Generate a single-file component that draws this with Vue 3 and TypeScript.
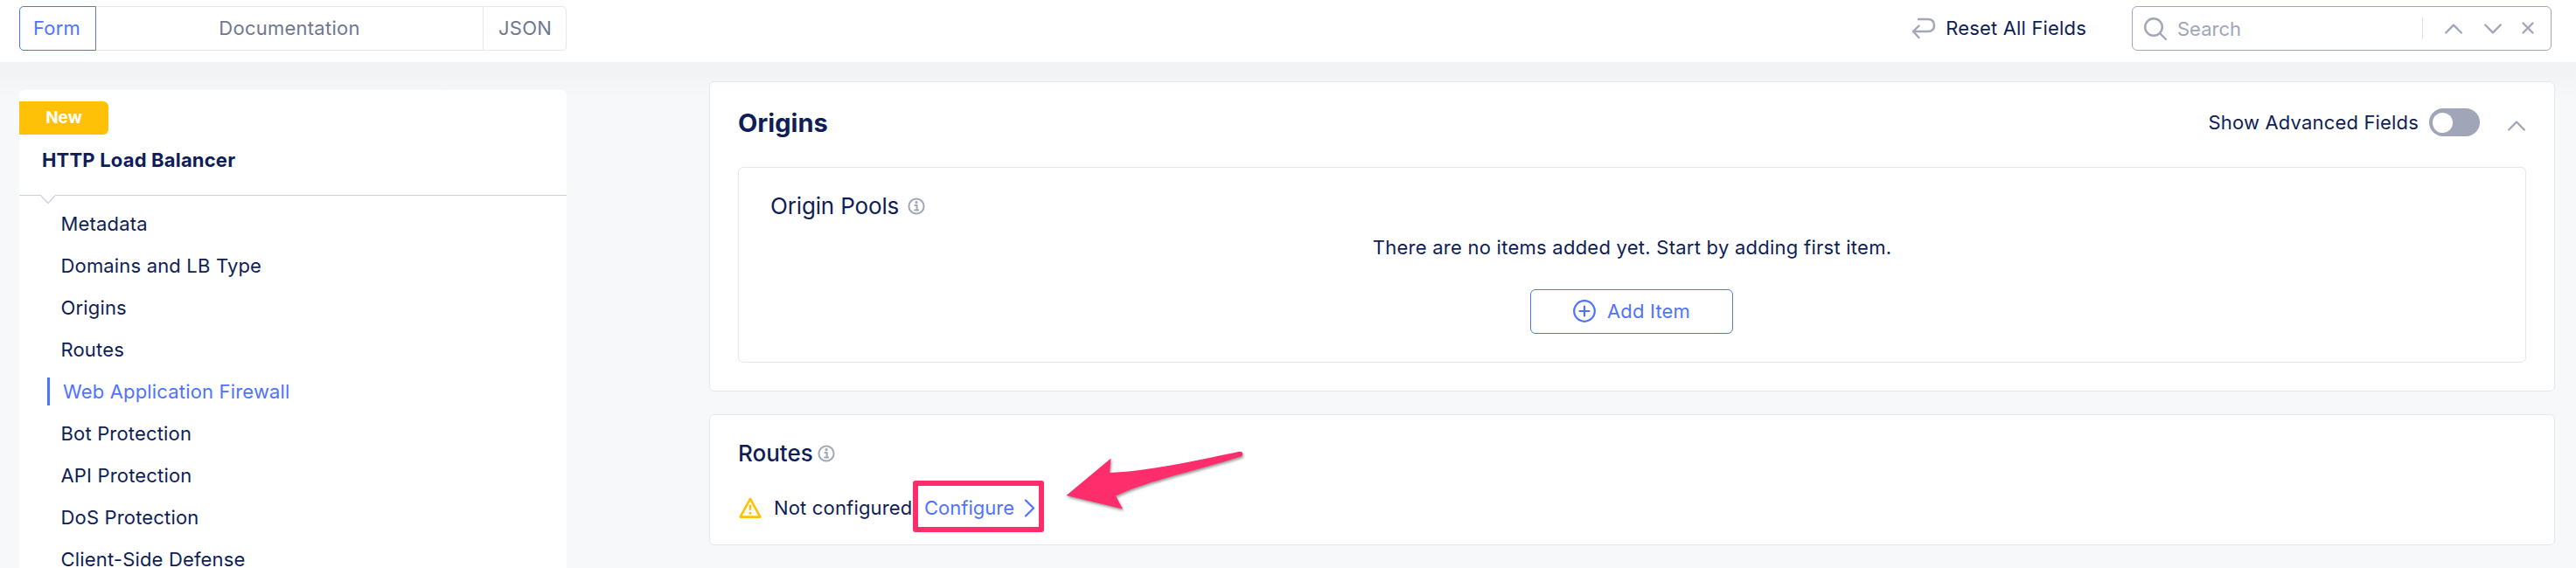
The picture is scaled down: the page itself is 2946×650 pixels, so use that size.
<script setup lang="ts">
const sections: string[] = [
  'Metadata',
  'Domains and LB Type',
  'Origins',
  'Routes',
  'Web Application Firewall',
  'Bot Protection',
  'API Protection',
  'DoS Protection',
  'Client-Side Defense',
]
const active = 'Web Application Firewall'
</script>

<template>
  <div class="page">
    <header class="topbar">
      <nav class="tabs">
        <button class="tab tab-form">Form</button>
        <button class="tab tab-doc">Documentation</button>
        <button class="tab tab-json">JSON</button>
      </nav>
      <div class="tools">
        <button class="reset">
          <svg width="28" height="26" viewBox="0 0 28 26" class="line">
            <path d="M8 3H18.5C23.5 3 26 5.8 26 10S23.5 17 18.5 17H2" />
            <path d="M8.5 10.5L2 17L8.5 24" />
          </svg>
          <span>Reset All Fields</span>
        </button>
        <div class="search">
          <svg width="28" height="28" viewBox="0 0 28 28" class="line">
            <circle cx="12" cy="12" r="9.8" />
            <path d="M19 19L26 26" />
          </svg>
          <span class="placeholder">Search</span>
          <span class="bar"></span>
          <svg class="line up" width="20" height="12" viewBox="0 0 20 12"><path d="M1.2 10.5L10 1.7L18.8 10.5" /></svg>
          <svg class="line down" width="20" height="12" viewBox="0 0 20 12"><path d="M1.2 1.5L10 10.3L18.8 1.5" /></svg>
          <svg class="line close" width="14" height="14" viewBox="0 0 14 14"><path d="M1.5 1.5L12.5 12.5M12.5 1.5L1.5 12.5" /></svg>
        </div>
      </div>
    </header>

    <main class="body">
      <aside class="sidebar">
        <div class="side-head">
          <span class="badge">New</span>
          <h2>HTTP Load Balancer</h2>
          <svg class="notch" width="18" height="11" viewBox="0 0 18 11">
            <path d="M1 0H17V1L9 9.5L1 1Z" class="notch-fill" />
            <path d="M1 1L9 9.5L17 1" class="notch-line" />
          </svg>
        </div>
        <ul>
          <li v-for="s in sections" :key="s" :class="{ active: s === active }">{{ s }}</li>
        </ul>
      </aside>

      <section class="content">
        <article class="card origins">
          <div class="card-head">
            <h3>Origins</h3>
            <div class="advanced">
              <span>Show Advanced Fields</span>
              <span class="toggle"><span class="knob"></span></span>
              <svg class="line" width="20" height="12" viewBox="0 0 20 12"><path d="M1.2 10.5L10 1.5L18.8 10.5" /></svg>
            </div>
          </div>
          <div class="pool">
            <h4>
              Origin Pools
              <svg class="info" width="20" height="20" viewBox="0 0 20 20">
                <circle cx="10" cy="10" r="8.6" />
                <circle cx="10" cy="5.7" r="1.6" class="dot" />
                <path d="M7.7 9H10.6V14.4M7.3 14.6H13" />
              </svg>
            </h4>
            <p>There are no items added yet. Start by adding first item.</p>
            <button class="add">
              <svg width="26" height="26" viewBox="0 0 26 26">
                <circle cx="13" cy="13" r="11.8" />
                <path d="M13 7.5V18.5M7.5 13H18.5" />
              </svg>
              <span>Add Item</span>
            </button>
          </div>
        </article>

        <article class="card routes">
          <h4>
            Routes
            <svg class="info" width="20" height="20" viewBox="0 0 20 20">
              <circle cx="10" cy="10" r="8.6" />
              <circle cx="10" cy="5.7" r="1.6" class="dot" />
              <path d="M7.7 9H10.6V14.4M7.3 14.6H13" />
            </svg>
          </h4>
          <div class="status">
            <svg class="warn" width="26" height="26" viewBox="0 0 26 26">
              <path d="M13 2.8L24.4 23.6H1.6Z" />
              <path d="M13 9.5V15.8M13 18V20.5" />
            </svg>
            <span class="state">Not configured</span>
            <a class="configure">
              <span>Configure</span>
              <svg width="13" height="21" viewBox="0 0 13 21"><path d="M2 1.5L11 10.5L2 19.5" /></svg>
            </a>
          </div>
          <span class="highlight"></span>
          <svg class="arrow" width="220" height="90" viewBox="1210 505 220 90">
            <path d="M1219.5 567L1270.5 524.5L1269 541C1310 539.5 1362 528.5 1417.5 516.8C1421.5 516.3 1422.3 520.5 1419.5 522.3C1368 539 1314 549.5 1276 567.5L1284 582.5Z" />
          </svg>
        </article>
      </section>
    </main>
  </div>
</template>

<style>
body {
  margin: 0;
  overflow: hidden;
}
</style>

<style scoped>
* {
  box-sizing: border-box;
}
.page {
  height: 650px;
  overflow: hidden;
  display: flex;
  flex-direction: column;
  background: #f7f8fa;
  color: #0f1e57;
  font: 400 22px/32px Inter, "Liberation Sans", sans-serif;
  letter-spacing: 0.17px;
}
h2, h3, h4, p, ul {
  margin: 0;
  padding: 0;
}
button {
  font: inherit;
  letter-spacing: inherit;
  color: inherit;
  background: none;
  border: 0;
  padding: 0;
}
svg {
  display: block;
  flex: none;
  fill: none;
}
.line {
  stroke: #a0a7b8;
  stroke-width: 2.4;
  stroke-linecap: round;
  stroke-linejoin: round;
}
.topbar {
  height: 71px;
  flex: none;
  background: #fff;
  display: flex;
  justify-content: space-between;
  align-items: flex-start;
  padding: 7px 28px 0 22px;
}
.tabs {
  display: flex;
  width: 626px;
  height: 51px;
  color: #6f7890;
  letter-spacing: 0.25px;
}
.tab {
  border: 1px solid #e4e6f0;
  padding-bottom: 1px;
}
.tab-form {
  width: 88px;
  border-color: #4f73ff;
  border-radius: 5px 0 0 5px;
  color: #4f73ff;
  padding-right: 2px;
}
.tab-doc {
  flex: 1;
  border-width: 1px 0;
}
.tab-json {
  width: 96px;
  border-radius: 0 5px 5px 0;
  padding-left: 1px;
}
.tools {
  display: flex;
  height: 51px;
}
.reset {
  display: flex;
  align-items: center;
  gap: 11px;
  margin-right: 52px;
  padding-bottom: 1px;
}
.search {
  width: 480px;
  border: 1px solid #a0a7b8;
  border-radius: 6px;
  display: flex;
  align-items: center;
  padding-left: 12px;
  color: #a0a7b8;
  letter-spacing: 0;
}
.placeholder {
  margin-left: 11px;
  padding-top: 1px;
}
.search .bar {
  margin-left: auto;
  width: 1px;
  height: 25px;
  background: #dfe2ea;
}
.search .up {
  margin-left: 25px;
}
.search .down {
  margin-left: 25px;
}
.search .close {
  margin: 0 19px 2px 23px;
}
.body {
  flex: 1;
  min-height: 0;
  display: flex;
  padding: 0 24px 0 22px;
  background: linear-gradient(#f1f2f4 0, #f3f4f6 18px, #f7f8fa 42px);
}
.sidebar {
  width: 626px;
  margin-top: 32px;
}
.side-head {
  position: relative;
  height: 121px;
  padding-top: 13px;
  background: #fff;
  border-bottom: 1px solid #ccd0de;
  border-radius: 6px 6px 0 0;
}
.badge {
  display: block;
  width: 102px;
  height: 38px;
  background: #ffc107;
  border-radius: 0 6px 6px 0;
  color: #fff;
  font-size: 19px;
  font-weight: 700;
  line-height: 37px;
  text-align: center;
  letter-spacing: 0;
}
h2 {
  margin: 13px 0 0 26px;
  font-size: 22px;
  font-weight: 700;
  letter-spacing: 0.18px;
}
.notch {
  position: absolute;
  left: 24px;
  top: 120px;
}
.notch-fill {
  fill: #fff;
}
.notch-line {
  stroke: #ccd0de;
  stroke-width: 1.2;
}
.sidebar ul {
  list-style: none;
  padding-top: 16px;
  background: #fff;
}
.sidebar li {
  height: 32px;
  margin: 0 0 16px 32px;
  padding-left: 15.5px;
}
.sidebar li.active {
  color: #4f73ff;
  border-left: 3px solid #4f73ff;
  padding-left: 15px;
}
.sidebar li:last-child {
  margin-bottom: 0;
}
.content {
  width: 2111px;
  margin-left: auto;
  padding-top: 22px;
}
.card {
  position: relative;
  background: #fff;
  border: 1px solid #e4e7ee;
  border-radius: 6px;
  padding: 0 32px;
}
.origins {
  height: 355px;
  background: linear-gradient(#fdfdfe 0, #fff 16px);
}
.card-head {
  height: 97px;
  padding-bottom: 5px;
  display: flex;
  align-items: center;
  justify-content: space-between;
}
h3 {
  font-size: 29px;
  font-weight: 700;
  letter-spacing: 0;
  padding-top: 2px;
}
.advanced {
  display: flex;
  align-items: center;
  padding-right: 1px;
}
.toggle {
  display: flex;
  align-items: center;
  width: 58px;
  height: 32px;
  margin: 0 32px 0 12px;
  padding-left: 4px;
  border-radius: 16px;
  background: #a0a5b8;
}
.knob {
  width: 23px;
  height: 23px;
  border-radius: 50%;
  background: #fff;
}
.advanced .line {
  margin-top: 7px;
}
.pool {
  height: 224px;
  border: 1px solid #e4e6f0;
  border-radius: 6px;
  display: flex;
  flex-direction: column;
  align-items: center;
}
h4 {
  align-self: stretch;
  display: flex;
  align-items: center;
  font-size: 26px;
  font-weight: 400;
  letter-spacing: -0.15px;
  gap: 10px;
}
.pool h4 {
  margin: 28px 0 0 36px;
}
.info {
  stroke: #a0a7b8;
  stroke-width: 2;
}
.info .dot {
  fill: #a0a7b8;
  stroke: none;
}
.pool p {
  margin-top: 15px;
  letter-spacing: 0.25px;
}
.add {
  width: 232px;
  height: 51px;
  margin: 32px 1px 0 0;
  padding-bottom: 1px;
  border: 1px solid #4f73ff;
  border-radius: 6px;
  color: #4f73ff;
  display: flex;
  align-items: center;
  justify-content: center;
  gap: 13px;
}
.add svg {
  stroke: #4f73ff;
  stroke-width: 2.2;
  stroke-linecap: round;
}
.routes {
  height: 150px;
  margin-top: 26px;
}
.routes h4 {
  margin-top: 28px;
  font-weight: 500;
  letter-spacing: 0;
  gap: 5px;
}
.status {
  display: flex;
  align-items: center;
  height: 32px;
  margin: 30px 0 0 1px;
}
.warn {
  stroke: #ffc107;
  stroke-width: 2.6;
  stroke-linejoin: round;
}
.state {
  width: 158px;
  margin-left: 14px;
  white-space: nowrap;
}
.configure {
  display: flex;
  align-items: center;
  margin-left: 14px;
  color: #4f73ff;
}
.configure span {
  width: 102px;
  letter-spacing: 0;
}
.configure svg {
  margin-left: 12px;
  stroke: #4f73ff;
  stroke-width: 2.2;
  stroke-linecap: round;
  stroke-linejoin: round;
}
.highlight {
  position: absolute;
  left: 232px;
  top: 75px;
  width: 150px;
  height: 59px;
  border: 6px solid #ff2d6c;
  border-radius: 3px;
}
.arrow {
  position: absolute;
  left: 398px;
  top: 30px;
  fill: #ff2d6c;
  filter: drop-shadow(1px 2px 1.5px rgba(0, 0, 0, 0.4));
}
</style>
